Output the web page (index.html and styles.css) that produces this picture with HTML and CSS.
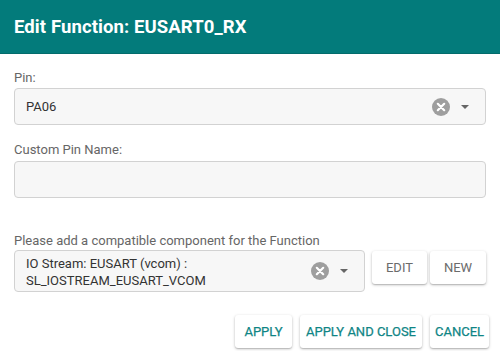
FILE: index.html
```html
<!DOCTYPE html>
<html lang="en">
<head>
    <meta charset="UTF-8">
    <title>Edit Function</title>
    <link rel="stylesheet" href="styles.css">
</head>
<body>
    <div class="dialog">
        <div class="dialog-header">
            <h1>Edit Function: EUSART0_RX</h1>
        </div>
        <div class="dialog-body">
            <label class="field-label label-pin">Pin:</label>
            <div class="select-box">
                <span class="select-value">PA06</span>
                <span class="clear-icon">
                    <svg width="18" height="18" viewBox="0 0 18 18"><circle cx="9" cy="9" r="9" fill="#9e9e9e"/><path d="M5.8 5.8l6.4 6.4M12.2 5.8l-6.4 6.4" stroke="#fff" stroke-width="2.2" stroke-linecap="round"/></svg>
                </span>
                <span class="caret"></span>
            </div>
            <label class="field-label label-name">Custom Pin Name:</label>
            <input type="text" class="text-input">
            <label class="field-label label-comp">Please add a compatible component for the Function</label>
            <div class="component-row">
                <div class="select-box select-tall">
                    <span class="select-value">IO Stream: EUSART (vcom) :<br>SL_IOSTREAM_EUSART_VCOM</span>
                    <span class="clear-icon">
                        <svg width="18" height="18" viewBox="0 0 18 18"><circle cx="9" cy="9" r="9" fill="#9e9e9e"/><path d="M5.8 5.8l6.4 6.4M12.2 5.8l-6.4 6.4" stroke="#fff" stroke-width="2.2" stroke-linecap="round"/></svg>
                    </span>
                    <span class="caret"></span>
                </div>
                <button class="btn btn-grey btn-edit">EDIT</button>
                <button class="btn btn-grey btn-new">NEW</button>
            </div>
        </div>
        <div class="dialog-actions">
            <button class="btn btn-teal btn-apply">APPLY</button>
            <button class="btn btn-teal btn-close">APPLY AND CLOSE</button>
            <button class="btn btn-teal btn-cancel">CANCEL</button>
        </div>
    </div>
</body>
</html>
```
FILE: styles.css
```css
body {
    margin: 0;
    font-family: Roboto, "Liberation Sans", Arial, sans-serif;
    background-color: #ffffff;
    width: 500px;
    height: 351px;
    overflow: hidden;
}
.dialog {
    display: flex;
    flex-direction: column;
}
.dialog-header {
    background-color: #037b7b;
    height: 54px;
    border-bottom: 1px solid #036b6b;
    display: flex;
    align-items: center;
    padding-left: 14px;
    box-sizing: border-box;
}
.dialog-header h1 {
    margin: 0;
    margin-top: 1px;
    font-size: 18.5px;
    font-weight: 700;
    color: #ffffff;
    letter-spacing: 0.1px;
}
.dialog-body {
    display: flex;
    flex-direction: column;
    padding: 0 14px;
}
.field-label {
    font-size: 13px;
    line-height: 16px;
    color: #666666;
    margin-bottom: 2px;
}
.label-pin {
    margin-top: 16px;
}
.label-name {
    margin-top: 17px;
    margin-bottom: 3px;
}
.label-comp {
    margin-top: 35px;
    margin-bottom: 1px;
}
.select-box {
    height: 37px;
    border: 1px solid #d2d2d2;
    border-radius: 4px;
    background-color: #f7f7f7;
    display: flex;
    align-items: center;
    padding: 0 16px 0 11px;
    box-sizing: border-box;
}
.select-value {
    flex: 1;
    font-size: 13px;
    line-height: 17px;
    color: #333333;
}
.select-tall .select-value {
    padding-top: 1px;
}
.clear-icon {
    display: flex;
    margin-right: 11px;
}
.caret {
    width: 0;
    height: 0;
    border-left: 4px solid transparent;
    border-right: 4px solid transparent;
    border-top: 4px solid #666666;
}
.text-input {
    height: 37px;
    border: 1px solid #d2d2d2;
    border-radius: 4px;
    background-color: #f7f7f7;
    box-sizing: border-box;
    margin: 0;
}
.component-row {
    display: flex;
    align-items: flex-start;
}
.select-tall {
    width: 351px;
    height: 42px;
}
.btn {
    font-family: Roboto, "Liberation Sans", Arial, sans-serif;
    font-size: 13px;
    font-weight: 400;
    background-color: #ffffff;
    border: none;
    border-radius: 3px;
    box-shadow: 0 1px 3px rgba(0, 0, 0, 0.25), 0 1px 1px rgba(0, 0, 0, 0.12);
    height: 33px;
    padding: 0;
    cursor: pointer;
}
.btn-grey {
    color: #6b6b6b;
    margin-top: 1px;
}
.btn-edit {
    width: 55px;
    margin-left: 7px;
}
.btn-new {
    width: 56px;
    margin-left: 3px;
}
.btn-teal {
    color: #0f8585;
    -webkit-text-stroke: 0.25px #0f8585;
}
.dialog-actions {
    display: flex;
    justify-content: flex-end;
    padding-right: 11px;
    margin-top: 23px;
    gap: 8px;
}
.btn-apply {
    width: 57px;
}
.btn-close {
    width: 122px;
}
.btn-cancel {
    width: 59px;
}
```
